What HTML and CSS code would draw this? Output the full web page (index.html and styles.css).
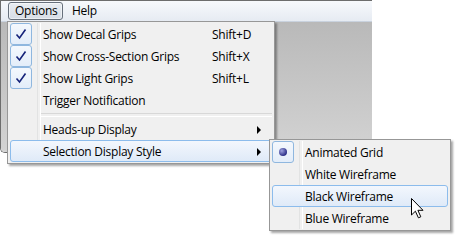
FILE: index.html
```html
<!DOCTYPE html>
<html lang="en">
<head>
  <meta charset="UTF-8" />
  <title>Options Menu</title>
  <link rel="stylesheet" href="styles.css">
</head>
<body>
  <div class="window">
    <div class="menubar">
      <span class="menubar-item open">Options</span>
      <span class="menubar-item">Help</span>
    </div>
    <div class="client"></div>
  </div>

  <div class="menu main-menu">
    <div class="menu-item">
      <span class="icon check"><svg width="12" height="12" viewBox="0 0 12 12"><path d="M1.5 6.5 L4.5 10 L10.5 1.5" fill="none" stroke="#16237a" stroke-width="1.6"/></svg></span>
      <span class="label">Show Decal Grips</span>
      <span class="shortcut">Shift+D</span>
    </div>
    <div class="menu-item">
      <span class="icon check"><svg width="12" height="12" viewBox="0 0 12 12"><path d="M1.5 6.5 L4.5 10 L10.5 1.5" fill="none" stroke="#16237a" stroke-width="1.6"/></svg></span>
      <span class="label">Show Cross-Section Grips</span>
      <span class="shortcut">Shift+X</span>
    </div>
    <div class="menu-item">
      <span class="icon check"><svg width="12" height="12" viewBox="0 0 12 12"><path d="M1.5 6.5 L4.5 10 L10.5 1.5" fill="none" stroke="#16237a" stroke-width="1.6"/></svg></span>
      <span class="label">Show Light Grips</span>
      <span class="shortcut">Shift+L</span>
    </div>
    <div class="menu-item">
      <span class="icon"></span>
      <span class="label">Trigger Notification</span>
    </div>
    <div class="separator"></div>
    <div class="menu-item">
      <span class="icon"></span>
      <span class="label">Heads-up Display</span>
      <span class="shortcut"></span>
      <span class="arrow"></span>
    </div>
    <div class="menu-item hot">
      <span class="icon"></span>
      <span class="label">Selection Display Style</span>
      <span class="shortcut"></span>
      <span class="arrow"></span>
    </div>
  </div>

  <div class="menu sub-menu">
    <div class="menu-item">
      <span class="icon check"><span class="bullet"></span></span>
      <span class="label">Animated Grid</span>
    </div>
    <div class="menu-item">
      <span class="icon"></span>
      <span class="label">White Wireframe</span>
    </div>
    <div class="menu-item hot">
      <span class="icon"></span>
      <span class="label">Black Wireframe</span>
    </div>
    <div class="menu-item">
      <span class="icon"></span>
      <span class="label">Blue Wireframe</span>
    </div>
  </div>

  <svg class="cursor" width="13" height="21" viewBox="0 0 13 21">
    <path d="M0.5 0.5 L0.5 17 L4.4 13.2 L7.4 19.8 L9.8 18.8 L6.9 12.3 L12 12.3 Z" fill="#fff" stroke="#000" stroke-width="1" stroke-linejoin="miter"/>
  </svg>
</body>
</html>
```

FILE: styles.css
```css
* { box-sizing: border-box; }
body {
  margin: 0;
  width: 460px;
  height: 240px;
  background: #fff;
  font-family: 'Open Sans', 'Noto Sans', sans-serif;
  font-size: 12px;
  letter-spacing: -0.25px;
  color: #000;
  position: relative;
  overflow: hidden;
}

/* Window behind the menus */
.window {
  width: 372px;
  height: 153px;
  border: 1px solid #6d6d6d;
  border-right: none;
  border-radius: 0 0 0 5px;
  display: flex;
  flex-direction: column;
  overflow: hidden;
}
.menubar {
  height: 21px;
  background: linear-gradient(#f7f9fc, #e6ebf2);
  border-bottom: 1px solid #c9d2de;
  display: flex;
  align-items: center;
  padding-left: 7px;
  gap: 2px;
}
.menubar-item {
  padding: 0 6px;
  height: 18px;
  line-height: 16px;
  border: 1px solid transparent;
  border-radius: 3px;
}
.menubar-item.open {
  width: 55px;
  border-color: #67707c;
  background: linear-gradient(#e9edf2, #d7dde6);
  box-shadow: inset 0 0 0 1px rgba(255,255,255,0.5);
}
.client {
  flex: 1;
  background: linear-gradient(#b9b9b9, #d3d3d3);
}

/* Menus */
.menu {
  position: absolute;
  background: #f0f0f0;
  border: 1px solid #979797;
  box-shadow: 2px 2px 2px rgba(0,0,0,0.35);
  padding: 1px 2px;
}
.menu::before {
  content: '';
  position: absolute;
  top: 1px;
  bottom: 1px;
  left: 29px;
  width: 2px;
  border-left: 1px solid #e2e3e3;
  border-right: 1px solid #fff;
}
.main-menu {
  left: 7px;
  top: 21px;
  width: 268px;
}
.sub-menu {
  left: 269px;
  top: 139px;
  width: 182px;
}

.menu-item {
  position: relative;
  display: grid;
  grid-template-columns: 32px 169px 1fr 14px;
  align-items: center;
  height: 22px;
  border: 1px solid transparent;
  border-radius: 3px;
}
.sub-menu .menu-item { grid-template-columns: 32px 1fr; }
.menu-item.hot {
  border-color: #8cbcec;
  background: linear-gradient(#f3f7fd, #dfeaf8);
}
.label { white-space: nowrap; line-height: 20px; }
.shortcut { line-height: 20px; }

.icon {
  width: 22px;
  height: 22px;
  margin: -1px 0 0 -1px;
  display: flex;
  align-items: center;
  justify-content: center;
}
.icon.check {
  border: 1px solid #8fb7df;
  border-radius: 3px;
  background: linear-gradient(#f4f8fd, #e3edf9);
}
.bullet {
  width: 8px;
  height: 8px;
  border-radius: 50%;
  background: radial-gradient(circle at 35% 35%, #9fa3e0, #2e3188 70%);
}
.arrow {
  width: 0;
  height: 0;
  border-left: 4px solid #000;
  border-top: 4px solid transparent;
  border-bottom: 4px solid transparent;
}

.separator {
  height: 7px;
  margin-left: 30px;
  display: flex;
  flex-direction: column;
  justify-content: center;
}
.separator::before {
  content: '';
  height: 2px;
  border-top: 1px solid #d8d8d8;
  border-bottom: 1px solid #fff;
}

.cursor {
  position: absolute;
  left: 411px;
  top: 198px;
}
```
